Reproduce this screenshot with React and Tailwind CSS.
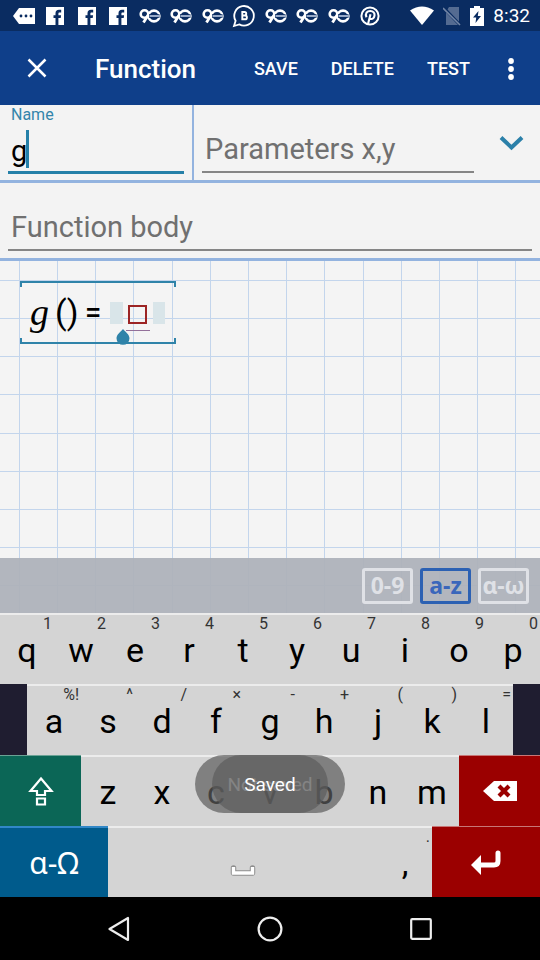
import React from "react";

const TOP_ROW = [
  ["q", "1"], ["w", "2"], ["e", "3"], ["r", "4"], ["t", "5"],
  ["y", "6"], ["u", "7"], ["i", "8"], ["o", "9"], ["p", "0"],
];
const HOME_ROW = [
  ["a", "%!"], ["s", "^"], ["d", "/"], ["f", "×"], ["g", "-"],
  ["h", "+"], ["j", "("], ["k", ")"], ["l", "="],
];
const BOTTOM_ROW = [["z"], ["x"], ["c"], ["v"], ["b"], ["n"], ["m"]];

function TagIcon() {
  return (
    <svg width="24" height="18" viewBox="0 0 24 18">
      <path d="M7 1h16v16H7L1 9z" fill="#fff" />
      <g fill="#0a2c61">
        <circle cx="9" cy="9" r="1.4" />
        <circle cx="14" cy="9" r="1.4" />
        <circle cx="19" cy="9" r="1.4" />
      </g>
    </svg>
  );
}

function FacebookIcon() {
  return (
    <svg width="18" height="18" viewBox="0 0 18 18">
      <path d="M0 0h18v18H0z" fill="#fff" />
      <path d="M9.500 18v-7H7.500V8.200h2V6.500c0-2.400 1.200-3.700 3.500-3.700h2.200v2.700h-1.600c-.9 0-1.200.4-1.200 1.200v1.500h2.700l-.4 2.800h-2.300v7z" fill="#0a2c61" />
    </svg>
  );
}

function NinetyIcon() {
  return (
    <svg width="22" height="16" viewBox="0 0 22 16" fill="none" stroke="#fff">
      <circle cx="5.500" cy="6" r="3.800" strokeWidth="2.600" />
      <path d="M9.200 7L4.500 14.500" strokeWidth="2.800" />
      <circle cx="15" cy="8" r="5.400" strokeWidth="2.600" />
      <path d="M10 8h10.500" stroke="#0a2c61" strokeWidth="3.600" />
      <path d="M10.500 8h10" stroke="#a9b9d4" strokeWidth="1.800" />
    </svg>
  );
}

function BubbleIcon() {
  return (
    <svg width="24" height="24" viewBox="0 0 24 24" fill="none" stroke="#fff">
      <path d="M2 22l1.600-5.200A9.800 9.800 0 1 1 7.300 20.400z" strokeWidth="1.800" />
      <path d="M10.300 8h2.200a1.700 1.700 0 0 1 0 3.500h-2.200zm0 3.500h2.700a1.900 1.900 0 0 1 0 3.800h-2.700z" strokeWidth="1.900" />
    </svg>
  );
}

function PinterestIcon() {
  return (
    <svg width="20" height="20" viewBox="0 0 20 20" fill="none" stroke="#fff">
      <circle cx="10" cy="10" r="8.600" strokeWidth="2" />
      <path d="M6.500 11.200C4.800 7.500 7 5 10.300 5c3 0 4.600 2 4.200 4.600-.4 2.700-2.300 4-4.300 3.200l-.7-.8M10.500 8.200L8 18" strokeWidth="2.100" />
    </svg>
  );
}

function StatusBar() {
  return (
    <div className="flex h-[31px] items-center bg-[#0a2c61] pl-2 pr-[10px] text-white">
      <div className="grid w-[378px] grid-cols-12 place-items-center">
        <TagIcon />
        <FacebookIcon />
        <FacebookIcon />
        <FacebookIcon />
        <NinetyIcon />
        <NinetyIcon />
        <NinetyIcon />
        <BubbleIcon />
        <NinetyIcon />
        <NinetyIcon />
        <NinetyIcon />
        <PinterestIcon />
      </div>
      <div className="ml-auto flex items-center gap-[9px]">
        <svg width="24" height="20" viewBox="0 0 24 20">
          <path d="M0 4.500Q12-3.500 24 4.500L12 19z" fill="#fff" />
        </svg>
        <svg width="18" height="20" viewBox="0 0 18 20">
          <path d="M6 1h10v18H3V6z" fill="#546b91" />
          <path d="M0 1l17 18" stroke="#0a2c61" strokeWidth="3" />
          <path d="M0 2l17 17" stroke="#7386a6" strokeWidth="1.600" />
        </svg>
        <svg width="14" height="20" viewBox="0 0 14 20">
          <path d="M4 0h6v2h4v18H0V2h4z" fill="#fff" />
          <path d="M8.500 5L3 11.500h3.200L5.500 17 11 10H7.800z" fill="#0a2c61" />
        </svg>
        <span className="text-[19px] leading-6">8:32</span>
      </div>
    </div>
  );
}

function AppBar() {
  return (
    <header className="flex h-[74px] items-center bg-[#0f3f8a] pl-[27px] pr-[21px] text-white">
      <button aria-label="Close">
        <svg width="20" height="20" viewBox="0 0 20 20" stroke="#fff" strokeWidth="2.500">
          <path d="M1.500 1.500l17 17M18.500 1.500l-17 17" />
        </svg>
      </button>
      <h1 className="ml-12 pt-[2px] text-[26px] font-medium leading-8">Function</h1>
      <div className="ml-auto flex items-center gap-[33px] pt-[2px] text-[18px] font-medium leading-6">
        <button>SAVE</button>
        <button>DELETE</button>
        <button>TEST</button>
        <button aria-label="More options">
          <svg width="16" height="24" viewBox="0 0 16 24" fill="#fff">
            <circle cx="8" cy="4" r="2.900" />
            <circle cx="8" cy="12" r="2.900" />
            <circle cx="8" cy="20" r="2.900" />
          </svg>
        </button>
      </div>
    </header>
  );
}

function Fields() {
  return (
    <form className="bg-[#f3f3f3]">
      <div className="flex h-[78px] border-b-[3px] border-[#93b3df]">
        <div className="relative flex w-[194px] flex-col border-r-2 border-[#93b3df] px-2">
          <label htmlFor="fn-name" className="px-[3px] text-[16px] leading-5 text-[#3385ab]">Name</label>
          <input
            id="fn-name"
            defaultValue="g"
            className="h-[49px] w-full border-b-[3px] border-[#2580a8] bg-transparent px-[3px] pt-[6px] text-[29px] text-black outline-none"
          />
          <span className="absolute left-[26px] top-[25px] h-[38px] w-[3px] bg-[#2580a8]" />
        </div>
        <div className="flex min-w-0 flex-1 items-start pl-2 pr-4">
          <input
            aria-label="Parameters"
            placeholder="Parameters x,y"
            className="h-[68px] min-w-0 flex-1 border-b-2 border-[#858585] bg-transparent px-[3px] pt-[22px] text-[29px] outline-none placeholder:text-[#707070]"
          />
          <button type="button" aria-label="Expand" className="ml-[25px] mt-[30px]">
            <svg width="25" height="16" viewBox="0 0 25 16" fill="none" stroke="#2b80a9" strokeWidth="4">
              <path d="M2 2.500l10.500 10L23 2.500" />
            </svg>
          </button>
        </div>
      </div>
      <div className="h-[78px] border-b-[3px] border-[#93b3df] px-2">
        <input
          aria-label="Function body"
          placeholder="Function body"
          className="h-[68px] w-full border-b-2 border-[#858585] bg-transparent px-[3px] pt-[22px] text-[29px] outline-none placeholder:text-[#707070]"
        />
      </div>
    </form>
  );
}

function GridPaper() {
  return (
    <svg className="absolute inset-0 h-full w-full" aria-hidden="true">
      <defs>
        <pattern id="paper" x="19" y="19" width="191" height="191" patternUnits="userSpaceOnUse">
          <path
            d="M.5 0v191M38.500 0v191M76.500 0v191M114.500 0v191M153.500 0v191M0 .5h191M0 38.500h191M0 76.500h191M0 114.500h191M0 153.500h191"
            stroke="#c3d5ec"
            strokeWidth="1"
          />
        </pattern>
      </defs>
      <rect width="100%" height="100%" fill="url(#paper)" />
    </svg>
  );
}

function Formula() {
  return (
    <div className="relative ml-5 mt-5 flex w-[156px] flex-col">
      <div className="h-[6px] border-x-2 border-t-2 border-[#2f83a9]" />
      <div className="flex h-[51px] items-center pl-[10px] text-black">
        <span className="w-[25px] font-['Liberation_Serif',serif] text-[38px] italic leading-[51px]">g</span>
        <span className="w-[30px] text-[34px] leading-[51px]">()</span>
        <span className="w-[25px] text-[29px] font-medium leading-[51px]">=</span>
        <span className="h-[22px] w-[13px] bg-[#d9e5e9]" />
        <span className="ml-[5px] mt-1 h-[19px] w-[19px] border-2 border-[#9c2424]" />
        <span className="ml-[6px] h-[22px] w-[12px] bg-[#d9e5e9]" />
      </div>
      <div className="h-[6px] border-x-2 border-b-2 border-[#2f83a9]" />
      <span className="absolute left-[106px] top-[49px] h-px w-6 bg-[#93709a]" />
      <svg className="absolute left-[96px] top-[48px]" width="14" height="16" viewBox="0 0 14 16">
        <path d="M7 0C9 2.500 13.500 5.500 13.500 9.300a6.500 6.500 0 0 1-13 0C.5 5.500 5 2.500 7 0z" fill="#2f83a9" />
      </svg>
    </div>
  );
}

function ModeBar() {
  const base = "flex h-9 w-[51px] items-center justify-center rounded-[3px] border-[3px] pb-[2px] font-['Noto_Sans','Open_Sans',sans-serif] text-[23px] font-bold leading-[28px]";
  return (
    <div className="relative flex h-[55px] items-center justify-end gap-[7px] bg-[#aeb2bb]/95 pr-[11px]">
      <button className={base + " border-[#dfe1e6] text-[#dfe1e6]"}>0-9</button>
      <button className={base + " border-[#2c61b3] text-[#3a66bb]"}>a-z</button>
      <button className={base + " border-[#dfe1e6] text-[#dfe1e6]"}>ɑ-ω</button>
    </div>
  );
}

function Key({ label, hint }) {
  return (
    <button className="relative h-full min-w-0 flex-1 bg-[#d4d4d4] text-[34px] leading-10 text-black">
      {hint && <span className="absolute right-[2px] top-0 text-[16px] leading-[18px] text-[#333]">{hint}</span>}
      {label}
    </button>
  );
}

function KeyRow({ children }) {
  return <div className="flex h-[71px] border-t-2 border-[#ececec]">{children}</div>;
}

function Toasts() {
  return (
    <div className="pointer-events-none absolute inset-x-0 top-[142px] grid place-items-center">
      <div className="col-start-1 row-start-1 flex h-[58px] w-[150px] items-center justify-center rounded-full bg-[#5c5c5c]/70 pt-[2px] text-[19px] text-white/75">
        Not saved
      </div>
      <div className="col-start-1 row-start-1 flex h-[58px] w-[116px] items-center justify-center rounded-full bg-[#5c5c5c]/70 pt-[2px] text-[19px] text-white">
        Saved
      </div>
    </div>
  );
}

function Keyboard() {
  return (
    <div className="relative bg-[#1f1d30]">
      <KeyRow>
        {TOP_ROW.map(([l, h]) => <Key key={l} label={l} hint={h} />)}
      </KeyRow>
      <div className="px-[5%]">
        <KeyRow>
          {HOME_ROW.map(([l, h]) => <Key key={l} label={l} hint={h} />)}
        </KeyRow>
      </div>
      <div className="flex h-[71px]">
        <button aria-label="Shift" className="flex w-[15%] items-center justify-center border-t border-[#6aa295] bg-[#0b6656]">
          <svg width="26" height="30" viewBox="0 0 26 30" fill="none" stroke="#fff" strokeWidth="2.200">
            <path d="M13 2.500L2.500 15H9v4h8v-4h6.500z" />
            <path d="M9 22.500h8v6H9z" />
          </svg>
        </button>
        <div className="flex flex-1 border-t-2 border-[#ececec]">
          {BOTTOM_ROW.map(([l]) => <Key key={l} label={l} />)}
        </div>
        <button aria-label="Backspace" className="flex w-[15%] items-center justify-center border-t border-[#c77676] bg-[#9b0000]">
          <svg width="34" height="20" viewBox="0 0 34 20">
            <path d="M11 0h23v20H11L0 10z" fill="#fff" />
            <path d="M16 5l10 10M26 5L16 15" stroke="#9b0000" strokeWidth="4.200" />
          </svg>
        </button>
      </div>
      <div className="flex h-[71px]">
        <button className="w-[20%] border-t-2 border-[#3187c7] bg-[#005b8c] font-['Noto_Sans','Open_Sans',sans-serif] text-[30px] text-white">
          ɑ-Ω
        </button>
        <button aria-label="Space" className="flex w-1/2 items-end justify-center border-t-2 border-[#ececec] bg-[#d4d4d4] pb-5">
          <svg width="26" height="13" viewBox="0 0 26 13" fill="none">
            <path d="M3.500 4v5h19V4" stroke="#8e8e8e" strokeWidth="5.500" strokeLinecap="round" strokeLinejoin="round" />
            <path d="M3.500 3v6h19V3" stroke="#fff" strokeWidth="3.400" />
          </svg>
        </button>
        <div className="flex w-[10%] border-t-2 border-[#ececec]">
          <Key label="," hint="." />
        </div>
        <button aria-label="Enter" className="flex w-[20%] items-center justify-center border-t border-[#c77676] bg-[#9b0000]">
          <svg width="30" height="26" viewBox="0 0 30 26">
            <path d="M8 16h15q4 0 4-4V4" fill="none" stroke="#fff" strokeWidth="5" strokeLinecap="round" />
            <path d="M10 6v20L0 16z" fill="#fff" />
          </svg>
        </button>
      </div>
      <Toasts />
    </div>
  );
}

function NavBar() {
  return (
    <nav className="flex h-[63px] items-center justify-between bg-black px-[20%]">
      <button aria-label="Back">
        <svg width="22" height="26" viewBox="0 0 22 26" fill="none" stroke="#eee" strokeWidth="2.200" strokeLinejoin="round">
          <path d="M20 2v22L1.500 13z" />
        </svg>
      </button>
      <button aria-label="Home">
        <svg width="26" height="26" viewBox="0 0 26 26" fill="none" stroke="#eee" strokeWidth="2.200">
          <circle cx="13" cy="13" r="11.400" />
        </svg>
      </button>
      <button aria-label="Recent apps">
        <svg width="22" height="22" viewBox="0 0 22 22" fill="none" stroke="#eee" strokeWidth="2.200">
          <rect x="1.200" y="1.200" width="19.600" height="19.600" rx="1" />
        </svg>
      </button>
    </nav>
  );
}

export default function App() {
  return (
    <div className="flex min-h-screen flex-col bg-[#f3f3f3] font-[Roboto,sans-serif]">
      <StatusBar />
      <AppBar />
      <Fields />
      <main className="relative flex flex-1 flex-col justify-between bg-[#f4f4f4]">
        <GridPaper />
        <Formula />
        <ModeBar />
      </main>
      <Keyboard />
      <NavBar />
    </div>
  );
}
